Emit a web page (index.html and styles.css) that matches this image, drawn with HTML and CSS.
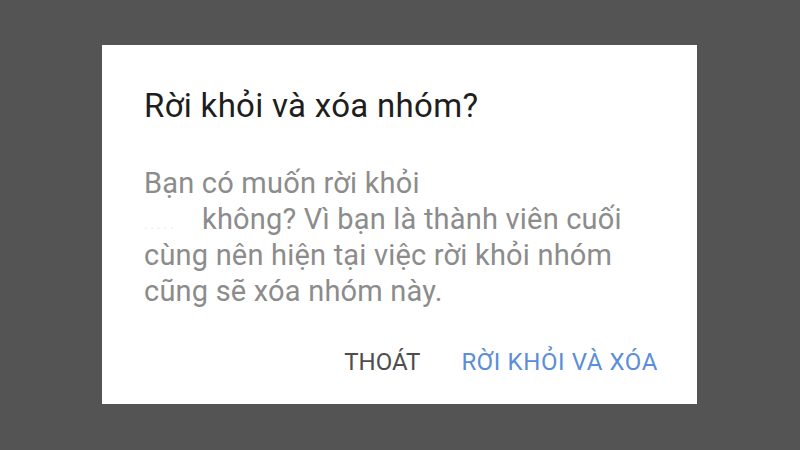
FILE: index.html
```
<!DOCTYPE html>
<html lang="vi">
<head>
    <meta charset="UTF-8">
    <meta name="viewport" content="width=device-width, initial-scale=1.0">
    <title>dialog</title>
    <link rel="stylesheet" href="styles.css">
</head>
<body>
    <div class="dialog">
        <div class="dialog-title">Rời khỏi và xóa nhóm?</div>
        <div class="dialog-text">
            Bạn có muốn rời khỏi<br>
            <span class="hidden-name">. . . . .</span>không? Vì bạn là thành viên cuối<br>
            cùng nên hiện tại việc rời khỏi nhóm<br>
            cũng sẽ xóa nhóm này.
        </div>
        <div class="dialog-actions">
            <button class="btn btn-cancel">THOÁT</button>
            <button class="btn btn-ok">RỜI KHỎI VÀ XÓA</button>
        </div>
    </div>
</body>
</html>
```

FILE: styles.css
```
body {
    margin: 0;
    height: 450px;
    background-color: #545454;
    font-family: Roboto, "Noto Sans", sans-serif;
    padding: 45px 0 0 102px;
    box-sizing: border-box;
}
.dialog {
    width: 595px;
    height: 359px;
    background-color: #fff;
    box-sizing: border-box;
    padding: 41px 39px 0 42px;
    display: flex;
    flex-direction: column;
}
.dialog-title {
    font-size: 33px;
    line-height: 40px;
    color: #1e1e1e;
    letter-spacing: 0.3px;
}
.dialog-text {
    margin-top: 39px;
    font-size: 29px;
    line-height: 36px;
    letter-spacing: 0.2px;
    color: #8c8c8c;
}
.hidden-name {
    display: inline-block;
    width: 58px;
    line-height: 1;
    color: #e6e6e6;
    font-size: 12px;
}
.dialog-actions {
    display: flex;
    justify-content: flex-end;
    gap: 41px;
    margin-top: 39px;
}
.btn {
    font-family: Roboto, "Noto Sans", sans-serif;
    font-size: 24px;
    line-height: 28px;
    letter-spacing: 0.6px;
    background: none;
    border: none;
    padding: 0;
    cursor: pointer;
}
.btn-cancel {
    color: #4d4d4d;
    letter-spacing: 0;
}
.btn-ok {
    color: #5b8ed8;
}
```
